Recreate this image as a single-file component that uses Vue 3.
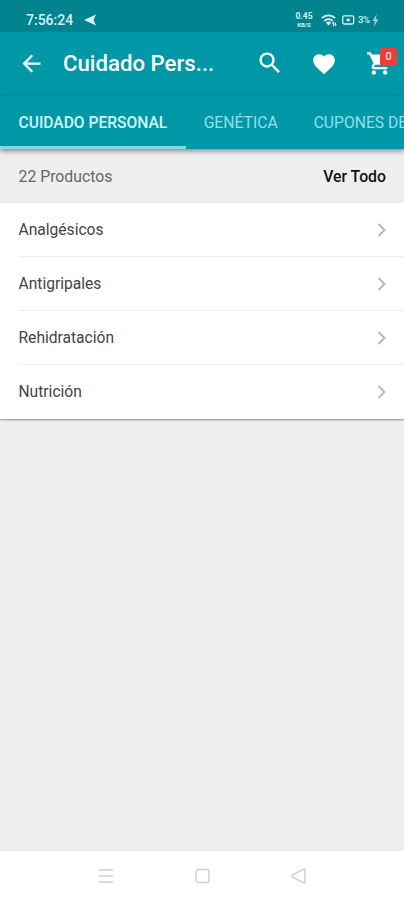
<script setup>
const tabs = ['CUIDADO PERSONAL', 'GENÉTICA', 'CUPONES DE DESCUENTO']
const categories = ['Analgésicos', 'Antigripales', 'Rehidratación', 'Nutrición']
</script>

<template>
  <div class="screen">
    <div class="status">
      <span class="clock">7:56:24</span>
      <svg class="plane" width="13" height="12" viewBox="0 0 13 12"><path d="M0 6 12 .5 9.5 6 12 11.5Z" /></svg>
      <div class="indicators">
        <div class="speed"><span>0.45</span><span class="unit">KB/S</span></div>
        <svg class="wifi" width="17" height="13" viewBox="0 0 17 13">
          <g fill="none" stroke="#d9f1f3" stroke-width="1.7">
            <path d="M.8 4.2C4.6.3 10.4.3 14.2 4.2M3.2 7c2.4-2.4 6.2-2.4 8.6 0" />
          </g>
          <path d="M4.9 8.4c1.4-1.2 3.8-1.2 5.2 0L7.5 11.7Z" />
          <path d="M12.3 7.5 14 9.6h-1.1v2.7h-1V9.6h-1.2zM14.6 12.3l-1.5-2h.9V8.4h.9v1.9h1z" />
        </svg>
        <svg class="battery" width="13" height="10" viewBox="0 0 13 10">
          <rect x=".7" y=".8" width="11" height="8.2" rx="1.4" fill="none" stroke="#d9f1f3" stroke-width="1.3" />
          <path d="M4.7 3.6h3v2.6h-3z" />
        </svg>
        <span class="percent">3%</span>
        <svg class="bolt" width="7" height="13" viewBox="0 0 7 13"><path d="M4.7 0 .5 7h2.3L1.7 13 6.5 5.3H3.9Z" /></svg>
      </div>
    </div>

    <header class="appbar">
      <svg class="back" width="27" height="27" viewBox="0 0 24 24"><path d="M20 11H7.83l5.59-5.59L12 4l-8 8 8 8 1.41-1.41L7.83 13H20v-2z" /></svg>
      <h1>Cuidado Pers...</h1>
      <div class="actions">
        <svg width="28" height="28" viewBox="0 0 24 24"><path d="M15.5 14h-.79l-.28-.27C15.41 12.59 16 11.11 16 9.5 16 5.91 13.09 3 9.5 3S3 5.91 3 9.5 5.91 16 9.5 16c1.61 0 3.09-.59 4.23-1.57l.27.28v.79l5 4.99L20.49 19l-4.99-5zm-6 0C7.01 14 5 11.99 5 9.5S7.01 5 9.5 5 14 7.01 14 9.5 11.99 14 9.5 14z" /></svg>
        <svg class="heart" width="26" height="26" viewBox="0 0 24 24"><path d="M12 21.35l-1.45-1.32C5.4 15.36 2 12.28 2 8.5 2 5.42 4.42 3 7.5 3c1.74 0 3.41.81 4.5 2.09C13.09 3.81 14.76 3 16.5 3 19.58 3 22 5.42 22 8.5c0 3.78-3.4 6.86-8.55 11.54L12 21.35z" /></svg>
        <div class="cart">
          <svg width="27" height="27" viewBox="0 0 24 24"><path d="M7 18c-1.1 0-1.99.9-1.99 2S5.9 22 7 22s2-.9 2-2-.9-2-2-2zM1 2v2h2l3.6 7.59-1.35 2.45c-.16.28-.25.61-.25.96 0 1.1.9 2 2 2h12v-2H7.42c-.14 0-.25-.11-.25-.25l.03-.12.9-1.63h7.45c.75 0 1.41-.41 1.75-1.03l3.58-6.49A1 1 0 0 0 20 4H5.21l-.94-2H1zm16 16c-1.1 0-1.99.9-1.99 2s.89 2 1.99 2 2-.9 2-2-.9-2-2-2z" /></svg>
          <span class="badge">0</span>
        </div>
      </div>
    </header>

    <nav class="tabs">
      <div v-for="(tab, i) in tabs" :key="tab" class="tab" :class="{ active: i === 0 }">{{ tab }}</div>
    </nav>

    <main>
      <div class="summary"><span class="count">22 Productos</span><span class="all">Ver Todo</span></div>
      <ul>
        <li v-for="item in categories" :key="item">
          <span>{{ item }}</span>
          <svg width="10" height="16" viewBox="0 0 10 16"><path d="m1.5 2 6 6-6 6" /></svg>
        </li>
      </ul>
    </main>

    <footer>
      <svg width="16" height="16" viewBox="0 0 16 16"><path d="M1 2h14M1 8h14M1 14h14" /></svg>
      <svg width="16" height="16" viewBox="0 0 16 16"><rect x="1" y="1.5" width="13" height="13" rx="2.5" /></svg>
      <svg width="16" height="16" viewBox="0 0 16 16"><path d="M1.4 7.2 12 1.3q2-.8 2 1.2v11q0 2-2 1.2L1.4 8.8q-1-.8 0-1.6Z" /></svg>
    </footer>
  </div>
</template>

<style>
body { margin: 0; }
</style>

<style scoped>
.screen {
  width: 100%;
  height: 900px;
  display: flex;
  flex-direction: column;
  overflow: hidden;
  background: #eee;
  font-family: Roboto, "Liberation Sans", sans-serif;
}
svg { display: block; flex: none; }
.status {
  box-sizing: border-box;
  height: 32px;
  flex: none;
  display: flex;
  align-items: center;
  padding: 8px 25px 0 26px;
  background: #00838f;
  color: #d9f1f3;
  fill: #d9f1f3;
}
.clock { width: 58px; font-size: 14px; line-height: 16px; font-weight: 500; }
.indicators { display: flex; align-items: center; margin-left: auto; }
.speed {
  display: flex;
  flex-direction: column;
  align-items: center;
  width: 18px;
  margin-right: 8px;
  font-size: 8.5px;
  line-height: 9px;
  font-weight: 700;
}
.unit { font-size: 6px; line-height: 7px; }
.wifi { margin-right: 4px; }
.battery { margin-right: 3px; }
.percent { width: 13px; font-size: 9.5px; line-height: 12px; font-weight: 500; letter-spacing: -0.5px; }
.bolt { margin-left: 1px; opacity: .7; }
.appbar {
  box-sizing: border-box;
  height: 64px;
  flex: none;
  display: flex;
  align-items: center;
  padding: 0 11px 2px 18px;
  background: #0097a7;
  color: #fff;
  fill: #fff;
}
h1 { margin: 0 0 0 18px; font-size: 22.2px; line-height: 28px; font-weight: 500; white-space: nowrap; }
.actions { display: flex; align-items: center; margin-left: auto; }
.heart { margin: 2px 29px 0 27px; }
.cart { position: relative; }
.badge {
  position: absolute;
  left: 14px;
  top: -2px;
  width: 17px;
  height: 18px;
  border-radius: 2px;
  background: #f13d36;
  color: #fff;
  font-size: 11px;
  line-height: 18px;
  text-align: center;
}
.tabs {
  position: relative;
  z-index: 1;
  height: 53px;
  flex: none;
  display: flex;
  background: #0097a7;
  box-shadow: 0 2px 5px rgba(0, 0, 0, .45);
}
.tab {
  box-sizing: border-box;
  flex: none;
  padding: 0 18px;
  border-bottom: 3px solid transparent;
  color: #92e0e7;
  font-size: 15.7px;
  line-height: 53px;
  white-space: nowrap;
}
.active { padding: 0 18.5px; border-bottom-color: #80d7df; color: #d2f7fa; font-weight: 500; font-size: 15.6px; line-height: 54px; }
main { flex: 1; }
.summary {
  height: 54px;
  display: flex;
  align-items: center;
  justify-content: space-between;
  padding: 0 18px 0 18.5px;
  font-size: 15.8px;
}
.count { color: #666; }
.all { color: #111; font-weight: 500; }
ul { margin: 0; padding: 0 0 0 18.5px; list-style: none; background: #fff; box-shadow: 0 1.5px 1.5px rgba(0, 0, 0, .3); }
li {
  box-sizing: border-box;
  height: 54px;
  display: flex;
  align-items: center;
  justify-content: space-between;
  padding-right: 17px;
  border-bottom: 1px solid #eee;
  color: #444;
  font-size: 15.6px;
}
li:last-child { border-bottom-color: transparent; }
li svg { fill: none; stroke: #b8b8b8; stroke-width: 2; }
footer {
  box-sizing: border-box;
  height: 49px;
  flex: none;
  display: flex;
  justify-content: space-between;
  padding: 17px 97px 0 98px;
  background: #fff;
}
footer svg { fill: none; stroke: #cecece; stroke-width: 1.4; }
</style>
